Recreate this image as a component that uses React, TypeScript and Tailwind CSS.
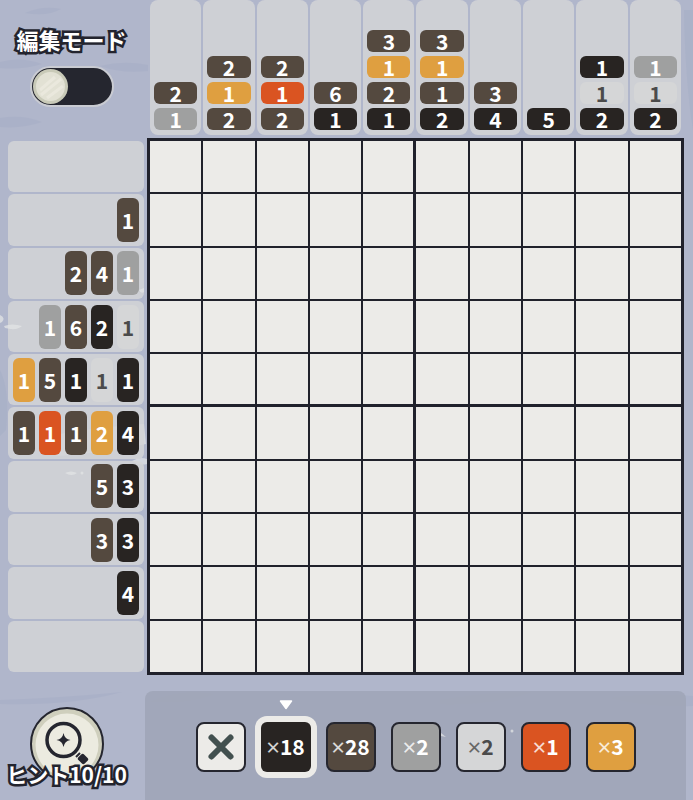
import { useState } from 'react';

type Clue = { n: number; c: string };

const colors: Record<string, string> = {
  black: 'bg-[#282422] text-white',
  brown: 'bg-[#54493f] text-white',
  gray: 'bg-[#9fa0a0] text-white',
  light: 'bg-[#d5d6d7] text-[#4b4b4b]',
  red: 'bg-[#da5421] text-white',
  yellow: 'bg-[#df9f40] text-white',
};

const k = (n: number): Clue => ({ n, c: 'black' });
const b = (n: number): Clue => ({ n, c: 'brown' });
const g = (n: number): Clue => ({ n, c: 'gray' });
const l = (n: number): Clue => ({ n, c: 'light' });
const r = (n: number): Clue => ({ n, c: 'red' });
const y = (n: number): Clue => ({ n, c: 'yellow' });

const colClues: Clue[][] = [
  [b(2), g(1)],
  [b(2), y(1), b(2)],
  [b(2), r(1), b(2)],
  [b(6), k(1)],
  [b(3), y(1), b(2), k(1)],
  [b(3), y(1), b(1), k(2)],
  [b(3), k(4)],
  [k(5)],
  [k(1), l(1), k(2)],
  [g(1), l(1), k(2)],
];

const rowClues: Clue[][] = [
  [],
  [b(1)],
  [b(2), b(4), g(1)],
  [g(1), b(6), k(2), l(1)],
  [y(1), b(5), k(1), l(1), k(1)],
  [b(1), r(1), b(1), y(2), k(4)],
  [b(5), k(3)],
  [b(3), k(3)],
  [k(4)],
  [],
];

const palette = [k(18), b(28), g(2), l(2), r(1), y(3)];

const outlined = 'text-white font-bold [-webkit-text-stroke:5px_#23242e] [paint-order:stroke_fill] [stroke-linejoin:round]';

function Backdrop() {
  return (
    <svg className="absolute inset-0 h-full w-full" viewBox="0 0 693 800" preserveAspectRatio="none" aria-hidden="true">
      <g fill="#98a2c0" opacity="0.22">
        <path d="M0 62q20-6 42 2q-20 6-42 4z" />
        <path d="M25 13q18-8 36-4q-14 8-36 4z" />
        <path d="M0 118q22-4 42 4q-20 7-42 5z" />
        <path d="M100 66q24-6 48-1v6q-26 3-48-5z" />
        <path d="M0 700q60-2 122-8q-50 14-122 12z" />
        <path d="M150 702q30-14 64-8q-22 10-64 8z" />
        <path d="M440 700q45-8 92-8q-40 14-92 12z" />
        <path d="M610 698q40-6 83-2v10q-42 2-83-8z" />
        <path d="M684 10h9v120q-8-50-9-120z" />
        <path d="M0 370q10 20 6 60l-6 6z" />
      </g>
      <g fill="#e3e5e8" opacity="0.7">
        <path d="M132 461q8-5 15-2v5q-8 2-15-3z" />
        <path d="M50 436q40-8 94-12l2 20q-50 10-90 12z" />
      </g>
    </svg>
  );
}

// light brush flecks that show through on top of the clue strips
function Flecks() {
  return (
    <svg
      className="pointer-events-none absolute inset-0 h-full w-full"
      viewBox="0 0 693 800"
      preserveAspectRatio="none"
      aria-hidden="true"
    >
      <g fill="#e3e5e6" opacity="0.75">
        <path d="M0 315q6 3 2 7l-2 1z" />
        <path d="M4 326q8-3 18 0q-5 5-17 2z" />
        <path d="M65 473q6-3 12 0q-5 4-12 0z" />
        <circle cx="82" cy="473" r="1.500" />
        <path d="M139 290l5-2v4q-3 2-5-2z" />
        <path d="M441 733l5 4l-5-1z" />
        <circle cx="512" cy="731" r="1.500" />
      </g>
    </svg>
  );
}

export default function App() {
  const [edit, setEdit] = useState(false);
  const [selected, setSelected] = useState(0);
  const [cells, setCells] = useState<number[]>(Array(100).fill(-1));

  const paint = (i: number) => {
    setCells(cells.map((v, j) => (j === i ? (v === selected ? -1 : selected) : v)));
  };

  return (
    <div className="relative min-h-screen overflow-hidden bg-[#b0b6cb] font-['Noto_Sans_CJK_JP','Noto_Sans',sans-serif]">
      <Backdrop />
      <main className="relative grid min-h-screen grid-cols-[minmax(0,147fr)_minmax(0,537fr)] grid-rows-[auto_auto_1fr] pr-[9px]">
        <label className="flex flex-col items-center pt-6 pr-1">
          <span className={`text-[22px] leading-[30px] whitespace-nowrap ${outlined}`}>編集モード</span>
          <span className="relative mt-3 h-[41px] w-[84px]">
            <input
              type="checkbox"
              role="switch"
              className="block h-full w-full appearance-none rounded-full border-2 border-[#c9cbd2] bg-[#25262f]"
              checked={edit}
              onChange={(e) => setEdit(e.target.checked)}
            />
            <svg
              className={`pointer-events-none absolute top-0.5 h-[37px] w-[37px] ${edit ? 'right-0.5' : 'left-0.5'}`}
              viewBox="0 0 37 37"
              aria-hidden="true"
            >
              <circle cx="18.500" cy="18.500" r="17.500" fill="#c9cab8" />
              <circle cx="18.500" cy="18.500" r="14.500" fill="#e2e1d4" />
              <path d="M8 22L23 9M9 27L29 11M15 30L31 18" stroke="#eae8dd" strokeWidth="3" />
            </svg>
          </span>
        </label>

        <div className="mb-[3px] flex h-[135px] gap-0.5 px-[3px]">
          {colClues.map((clues, i) => (
            <div key={i} className="flex flex-1 flex-col justify-end gap-1 rounded-lg bg-[#d4d5d7]/85 px-1 pb-[5px]">
              {clues.map((clue, j) => (
                <span
                  key={j}
                  className={`flex h-[22px] items-center justify-center rounded-md text-[21px] leading-[22px] font-bold ${colors[clue.c]}`}
                >
                  {clue.n}
                </span>
              ))}
            </div>
          ))}
        </div>

        <div className="flex flex-col gap-0.5 py-[3px] pr-[3px] pl-2">
          {rowClues.map((clues, i) => (
            <div
              key={i}
              className="flex flex-1 items-center justify-end gap-1 rounded-md bg-[#d4d5d7]/85 pr-[5px]"
            >
              {clues.map((clue, j) => (
                <span
                  key={j}
                  className={`flex h-11 w-[22px] items-center justify-center rounded-md text-[21px] leading-[22px] font-bold ${colors[clue.c]}`}
                >
                  {clue.n}
                </span>
              ))}
            </div>
          ))}
        </div>

        <div className="grid aspect-square grid-cols-10 grid-rows-10 gap-0.5 border-[3px] border-[#20212b] bg-[#20212b]">
          {cells.map((v, i) => (
            <button
              key={i}
              aria-label={`${Math.floor(i / 10) + 1}-${(i % 10) + 1}`}
              onClick={() => paint(i)}
              className={`border-[#20212b] ${v >= 0 ? colors[palette[v].c] : 'bg-[#ecebe8]'} ${
                i % 10 === 4 ? 'border-r' : ''
              } ${Math.floor(i / 10) === 4 ? 'border-b' : ''}`}
            />
          ))}
        </div>

        <div className="flex justify-center pt-8 pr-[14px]">
          <button className="flex flex-col items-center self-start">
            <svg className="h-[74px] w-[74px]" viewBox="0 0 74 74" aria-hidden="true">
              <circle cx="37" cy="37" r="36" fill="#cfcfbd" stroke="#25262f" strokeWidth="2" />
              <circle cx="37" cy="38" r="31.500" fill="#ecebe0" />
              <circle cx="33.500" cy="33" r="16.500" fill="none" stroke="#25262f" strokeWidth="3.500" />
              <path d="M33.500 26Q34.500 32 40.500 33Q34.500 34 33.500 40Q32.500 34 26.500 33Q32.500 32 33.500 26z" fill="#25262f" />
              <path d="M46 50l4-4" stroke="#25262f" strokeWidth="2" />
              <rect x="48.500" y="48" width="9" height="8" rx="2" transform="rotate(45 53 52)" fill="#25262f" />
            </svg>
            <span className={`-mt-[22px] text-[21px] leading-[30px] whitespace-nowrap ${outlined}`}>ヒント10/10</span>
          </button>
        </div>

        <div className="-mx-0.5 mt-4 flex items-start justify-center gap-[15px] rounded-t-lg bg-[#a0a7b8]/95 pt-[31px]">
          <button
            aria-label="×"
            onClick={() => setSelected(-1)}
            className="flex h-[50px] w-[50px] items-center justify-center rounded-lg border-2 border-[#25262f] bg-[#ecebe8]"
          >
            <svg className="h-7 w-7" viewBox="0 0 28 28" aria-hidden="true">
              <path d="M4.500 4.500L23.500 23.500M23.500 4.500L4.500 23.500" stroke="#42504f" strokeWidth="6" strokeLinecap="round" />
            </svg>
          </button>
          {palette.map((p, i) => (
            <button
              key={i}
              onClick={() => setSelected(i)}
              className={`relative flex h-[50px] w-[50px] items-center justify-center text-[21px] ${colors[p.c]} ${
                selected === i ? 'rounded-md ring-6 ring-[#ecebe8]' : 'rounded-lg border-2 border-[#25262f]'
              }`}
            >
              {selected === i && (
                <svg className="absolute -top-[22px] h-[10px] w-[14px]" viewBox="0 0 14 10" aria-hidden="true">
                  <path d="M1.500 1h11L7 8.500z" fill="#fff" stroke="#fff" strokeWidth="1.500" strokeLinejoin="round" />
                </svg>
              )}
              <span className="font-['Noto_Sans',sans-serif] text-2xl opacity-80">×</span>
              <span className="font-bold">{p.n}</span>
            </button>
          ))}
        </div>
      </main>
      <Flecks />
    </div>
  );
}
